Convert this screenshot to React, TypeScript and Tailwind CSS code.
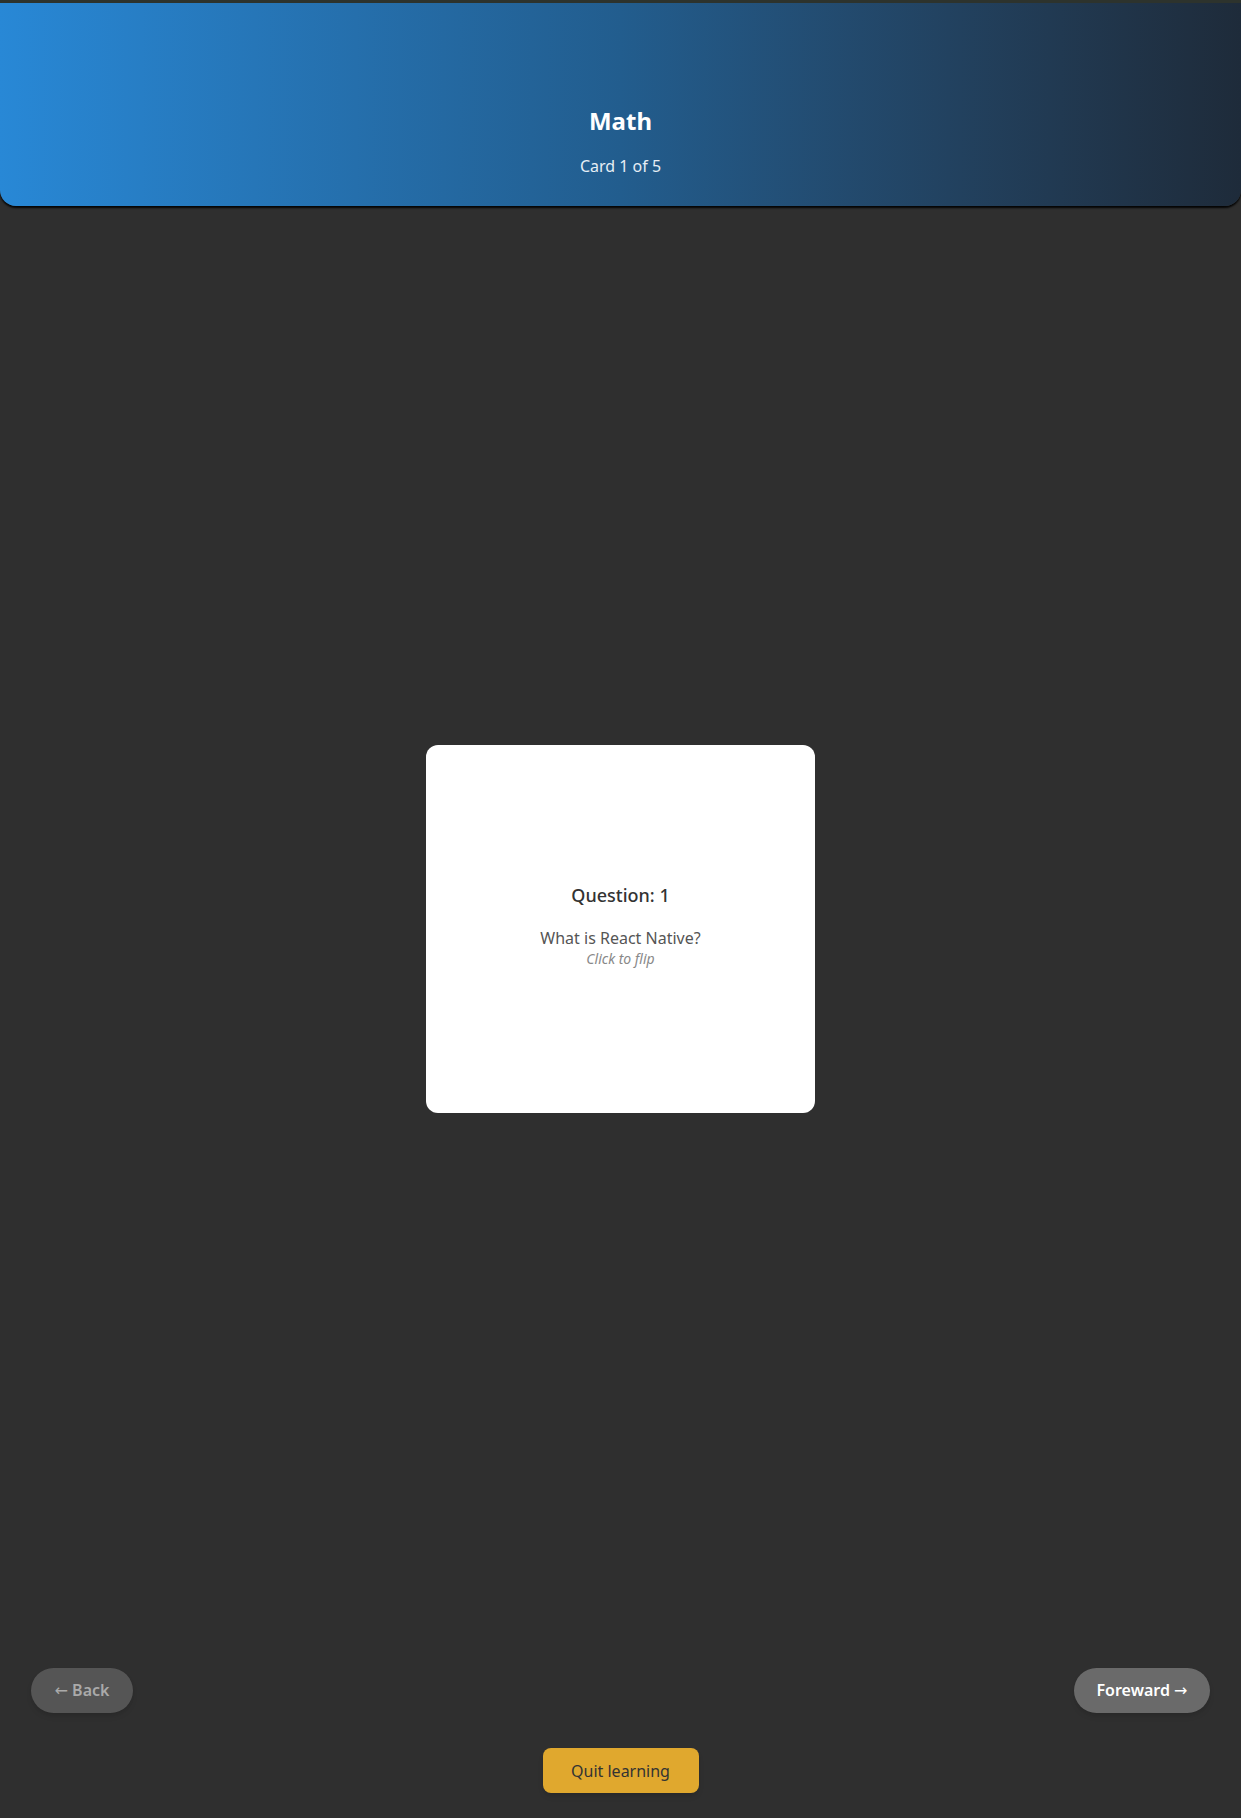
import React from 'react';

const font = { fontFamily: '"Segoe UI", "Noto Sans", "Open Sans", sans-serif' };
const arrowFont = { fontFamily: '"DejaVu Sans", sans-serif' };

const LearnPage: React.FC = () => {
    const deck = { title: 'Math', index: 1, total: 5, question: 'What is React Native?' };

    return (
        <div style={font} className="min-h-[1818px] flex flex-col bg-[#2f2f2f] border-t-[3px] border-[#2d332d]">
            <header className="h-[203px] flex flex-col items-center pt-[102px] rounded-b-2xl bg-gradient-to-r from-[#2888d6] via-[#225d8e] to-[#1e2b3a] shadow-[0_2px_2px_rgba(0,0,0,0.9)]">
                <h1 className="text-2xl leading-8 font-bold text-white">{deck.title}</h1>
                <p className="mt-[17px] text-base leading-6 text-[#e6eef5]">
                    Card {deck.index} of {deck.total}
                </p>
            </header>

            <main className="flex-1 flex items-center justify-center pb-4">
                <div className="w-[389px] h-[368px] pb-[7px] rounded-xl bg-white flex flex-col items-center justify-center cursor-pointer">
                    <h2 className="text-lg leading-6 font-medium text-[#333]">Question: {deck.index}</h2>
                    <p className="mt-5 text-base leading-[22px] text-[#555]">{deck.question}</p>
                    <p className="text-sm leading-5 italic text-[#888]">Click to flip</p>
                </div>
            </main>

            <div className="flex justify-between px-[31px]">
                <button className="h-[45px] w-[102px] rounded-full bg-[#555] text-[#aaa] font-semibold text-base shadow-md">
                    <span style={arrowFont} className="font-normal">←</span> Back
                </button>
                <button className="h-[45px] w-[136px] rounded-full bg-[#6a6a6a] text-white font-semibold text-base shadow-md">
                    Foreward <span style={arrowFont} className="font-normal">→</span>
                </button>
            </div>

            <div className="flex justify-center mt-[35px] mb-[25px]">
                <button className="h-[45px] w-[156px] rounded-lg bg-[#e0a82e] text-[#333] text-base shadow-md">
                    Quit learning
                </button>
            </div>
        </div>
    );
};

export default LearnPage;
